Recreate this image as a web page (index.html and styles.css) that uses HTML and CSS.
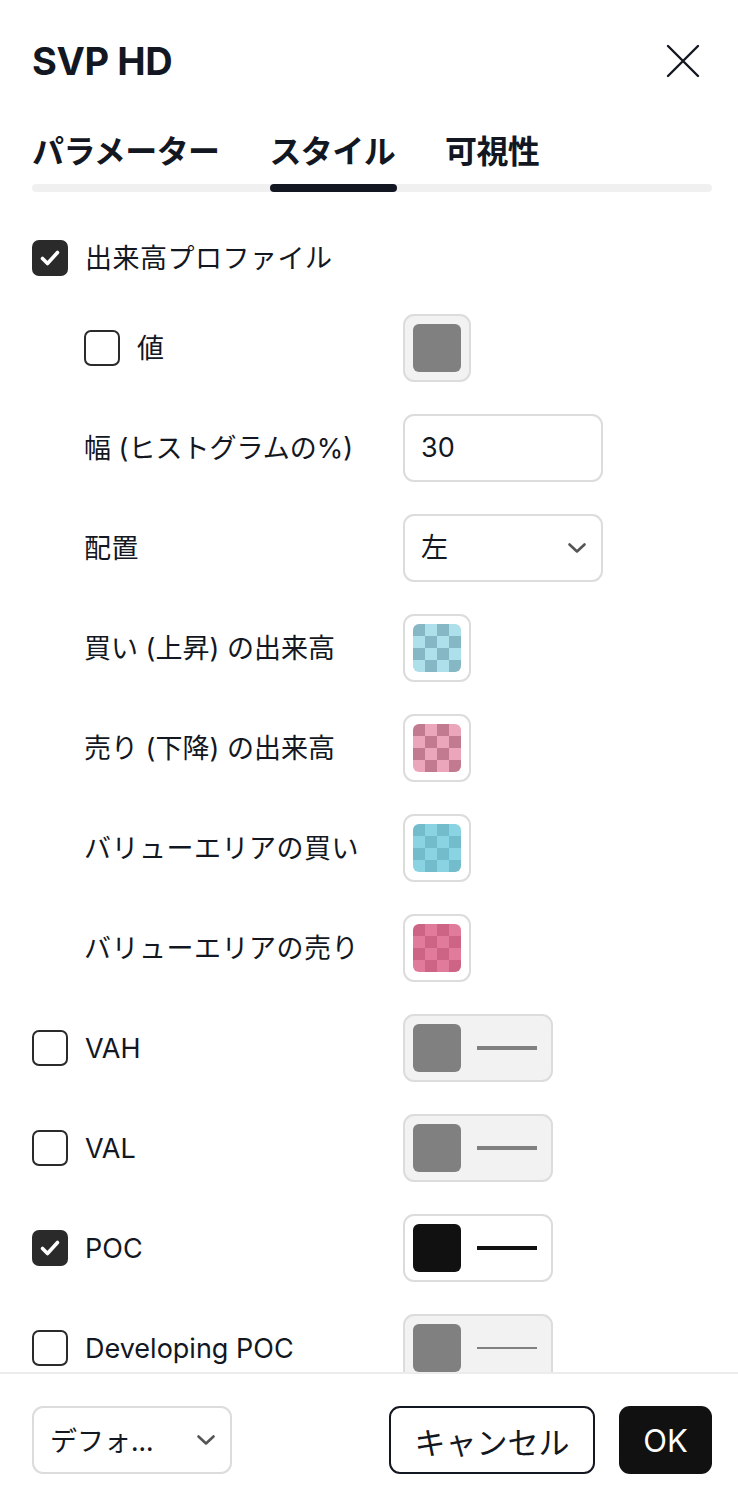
FILE: index.html
```html
<!DOCTYPE html>
<html lang="ja">
<head>
<meta charset="utf-8">
<title>SVP HD</title>
<link rel="stylesheet" href="styles.css">
</head>
<body>
<div class="dialog">
  <header class="header">
    <h1 class="title">SVP HD</h1>
    <button class="close" aria-label="閉じる">
      <svg width="34" height="34" viewBox="0 0 34 34"><path d="M2 2 L32 32 M32 2 L2 32" stroke="#131722" stroke-width="2.4" fill="none" stroke-linecap="round"/></svg>
    </button>
  </header>
  <nav class="tabs">
    <div class="tab-list">
      <span class="tab">パラメーター</span>
      <span class="tab active">スタイル</span>
      <span class="tab">可視性</span>
    </div>
    <div class="track"><div class="indicator"></div></div>
  </nav>
  <main class="body">
    <div class="rows">
      <div class="row first">
        <div class="left">
          <span class="cb checked"><svg width="36" height="36" viewBox="0 0 36 36"><path d="M10.5 18.5 L15.5 23.5 L25.5 12.5" stroke="#fff" stroke-width="3.6" fill="none" stroke-linecap="round" stroke-linejoin="round"/></svg></span>
          <span class="label ja">出来高プロファイル</span>
        </div>
      </div>
      <div class="row">
        <div class="left indent">
          <span class="cb"></span>
          <span class="label ja">値</span>
        </div>
        <div class="swatch disabled"><span class="fill gray"></span></div>
      </div>
      <div class="row">
        <div class="left indent"><span class="label">幅 (ヒストグラムの%)</span></div>
        <div class="field"><span class="value">30</span></div>
      </div>
      <div class="row">
        <div class="left indent"><span class="label ja">配置</span></div>
        <div class="field select"><span class="value">左</span>
          <svg class="chev" width="20" height="12" viewBox="0 0 20 12"><path d="M2.5 2.5 L10 9.5 L17.5 2.5" stroke="#555" stroke-width="2.6" fill="none" stroke-linecap="round" stroke-linejoin="round"/></svg>
        </div>
      </div>
      <div class="row">
        <div class="left indent"><span class="label">買い (上昇) の出来高</span></div>
        <div class="swatch"><span class="fill checker buy"></span></div>
      </div>
      <div class="row">
        <div class="left indent"><span class="label">売り (下降) の出来高</span></div>
        <div class="swatch"><span class="fill checker sell"></span></div>
      </div>
      <div class="row">
        <div class="left indent"><span class="label ja">バリューエリアの買い</span></div>
        <div class="swatch"><span class="fill checker vabuy"></span></div>
      </div>
      <div class="row">
        <div class="left indent"><span class="label ja">バリューエリアの売り</span></div>
        <div class="swatch"><span class="fill checker vasell"></span></div>
      </div>
      <div class="row">
        <div class="left"><span class="cb"></span><span class="label">VAH</span></div>
        <div class="swatch wide disabled"><span class="fill gray"></span><span class="line gray thick"></span></div>
      </div>
      <div class="row">
        <div class="left"><span class="cb"></span><span class="label">VAL</span></div>
        <div class="swatch wide disabled"><span class="fill gray"></span><span class="line gray thick"></span></div>
      </div>
      <div class="row">
        <div class="left">
          <span class="cb checked"><svg width="36" height="36" viewBox="0 0 36 36"><path d="M10.5 18.5 L15.5 23.5 L25.5 12.5" stroke="#fff" stroke-width="3.6" fill="none" stroke-linecap="round" stroke-linejoin="round"/></svg></span>
          <span class="label">POC</span>
        </div>
        <div class="swatch wide"><span class="fill black"></span><span class="line black thick"></span></div>
      </div>
      <div class="row">
        <div class="left"><span class="cb"></span><span class="label">Developing POC</span></div>
        <div class="swatch wide disabled"><span class="fill gray"></span><span class="line gray thin"></span></div>
      </div>
    </div>
  </main>
  <footer class="footer">
    <div class="field select preset"><span class="value">デフォ...</span>
      <svg class="chev" width="20" height="12" viewBox="0 0 20 12"><path d="M2.5 2.5 L10 9.5 L17.5 2.5" stroke="#555" stroke-width="2.6" fill="none" stroke-linecap="round" stroke-linejoin="round"/></svg>
    </div>
    <div class="actions">
      <button class="btn cancel">キャンセル</button>
      <button class="btn ok">OK</button>
    </div>
  </footer>
</div>
</body>
</html>
```
FILE: styles.css
```css
* { box-sizing: border-box; }
html, body { margin: 0; padding: 0; background: #fff; }
body {
  font-family: Inter, "Noto Sans CJK JP", sans-serif;
  color: #131722;
}
.dialog {
  width: 738px;
  height: 1496px;
  display: flex;
  flex-direction: column;
  overflow: hidden;
}
.header {
  display: flex;
  align-items: center;
  justify-content: space-between;
  padding: 39px 38px 0 32px;
  height: 83px;
}
.title {
  margin: 0;
  font-family: Inter, "Noto Sans CJK JP", sans-serif;
  font-size: 38px;
  font-weight: 700;
  line-height: 44px;
  letter-spacing: -0.4px;
}
.close {
  border: 0;
  background: none;
  padding: 0;
  width: 34px;
  height: 34px;
  display: flex;
}
.tabs {
  padding: 46px 26px 0 32px;
}
.tab-list {
  display: flex;
  gap: 50px;
  height: 40px;
  align-items: center;
}
.tab {
  font-family: "Noto Sans CJK JP", sans-serif;
  font-size: 32px;
  font-weight: 700;
  line-height: 40px;
  letter-spacing: -0.6px;
}
.track {
  margin-top: 15px;
  height: 8px;
  border-radius: 4px;
  background: #f0f0f0;
  position: relative;
}
.indicator {
  position: absolute;
  left: 238px;
  top: 0;
  width: 127px;
  height: 8px;
  border-radius: 4px;
  background: #131722;
}
.body {
  flex: 1;
  overflow: hidden;
  padding: 42px 0 0 32px;
}
.rows {
  display: flex;
  flex-direction: column;
  gap: 32px;
}
.row {
  display: grid;
  grid-template-columns: 371px auto;
  align-items: center;
  min-height: 68px;
}
.row.first { min-height: 48px; }
.left {
  display: flex;
  align-items: center;
  gap: 17px;
}
.left.indent { padding-left: 52px; }
.label {
  font-size: 27px;
  line-height: 36px;
  white-space: nowrap;
  padding-top: 2px;
}
.label.ja { letter-spacing: 0.5px; }
.cb {
  width: 36px;
  height: 36px;
  border: 2px solid #2a2a2a;
  border-radius: 7px;
  flex: none;
  display: flex;
  background: #fff;
}
.cb.checked {
  background: #2a2a2a;
  border: 0;
}
.swatch {
  width: 68px;
  height: 68px;
  border: 2px solid #dcdcdc;
  border-radius: 11px;
  background: #fff;
  display: flex;
  align-items: center;
  padding-left: 8px;
  gap: 16px;
}
.swatch.disabled { background: #f2f2f2; }
.swatch.wide { width: 150px; }
.fill {
  width: 48px;
  height: 48px;
  border-radius: 6px;
  flex: none;
}
.fill.gray { background: #808080; }
.fill.black { background: #111111; }
.checker {
  background-color: var(--l);
  background-image: conic-gradient(var(--l) 0 25%, var(--d) 0 50%, var(--l) 0 75%, var(--d) 0);
  background-size: 24px 24px;
  background-position: 0 0;
}
.checker.buy { --d: #86b7c4; --l: #ade0ea; }
.checker.sell { --d: #c27a91; --l: #eba6bb; }
.checker.vabuy { --d: #72bccc; --l: #8ad3e2; }
.checker.vasell { --d: #cd6485; --l: #e07b9b; }
.line {
  width: 60px;
  flex: none;
}
.line.gray { background: #808080; }
.line.black { background: #111111; }
.line.thick { height: 4px; }
.line.thin { height: 2px; }
.field {
  width: 200px;
  height: 68px;
  border: 2px solid #dcdcdc;
  border-radius: 11px;
  display: flex;
  align-items: center;
  justify-content: space-between;
  padding: 0 14px 0 16px;
  background: #fff;
}
.value {
  font-size: 27px;
  line-height: 36px;
}
.footer {
  border-top: 2px solid #ececec;
  padding: 32px 26px 22px 32px;
  display: flex;
  align-items: center;
  justify-content: space-between;
  flex: none;
}
.preset .value { font-family: "Noto Sans CJK JP", sans-serif; }
.actions {
  display: flex;
  gap: 24px;
}
.btn {
  height: 68px;
  border-radius: 11px;
  font-size: 31px;
  font-family: Inter, "Noto Sans CJK JP", sans-serif;
  padding: 0;
}
.cancel {
  width: 206px;
  border: 2px solid #131722;
  background: #fff;
  color: #131722;
}
.ok {
  width: 93px;
  border: 0;
  background: #111111;
  color: #fff;
}
```
